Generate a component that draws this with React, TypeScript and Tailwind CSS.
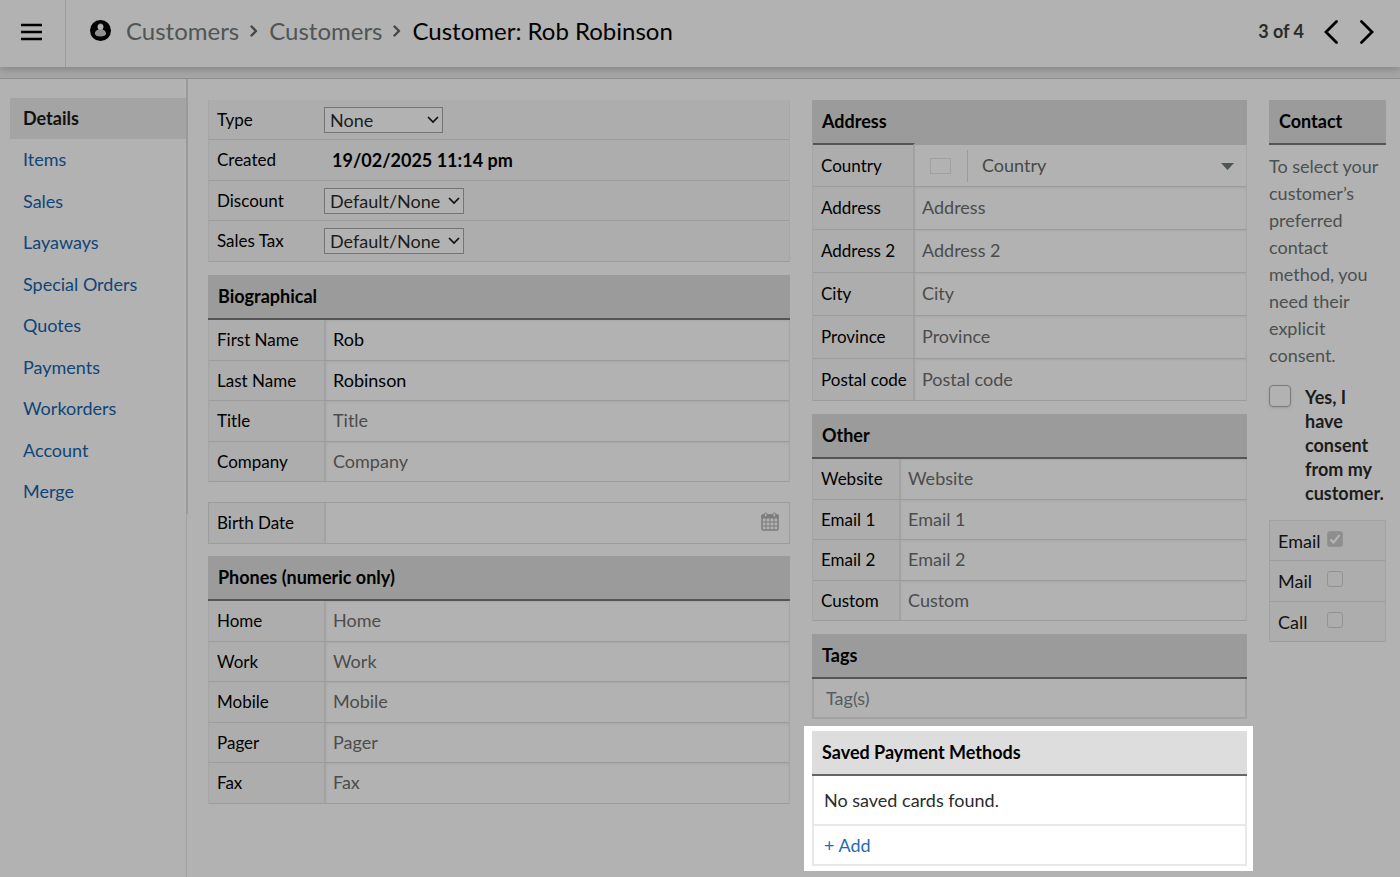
import { useState } from 'react';
import type { ReactNode } from 'react';
import clsx from 'clsx';

interface Field {
  label: string;
  value?: string;
}

const NAV_ITEMS = [
  'Details',
  'Items',
  'Sales',
  'Layaways',
  'Special Orders',
  'Quotes',
  'Payments',
  'Workorders',
  'Account',
  'Merge',
];

const BIO_FIELDS: Field[] = [
  { label: 'First Name', value: 'Rob' },
  { label: 'Last Name', value: 'Robinson' },
  { label: 'Title' },
  { label: 'Company' },
];

const PHONE_FIELDS: Field[] = [
  { label: 'Home' },
  { label: 'Work' },
  { label: 'Mobile' },
  { label: 'Pager' },
  { label: 'Fax' },
];

const ADDRESS_FIELDS: Field[] = [
  { label: 'Address' },
  { label: 'Address 2' },
  { label: 'City' },
  { label: 'Province' },
  { label: 'Postal code' },
];

const OTHER_FIELDS: Field[] = [
  { label: 'Website' },
  { label: 'Email 1' },
  { label: 'Email 2' },
  { label: 'Custom' },
];

const SUMMARY_ROW = 'odd:h-10 even:h-[41px]';

function SectionTitle({ children, className }: { children: ReactNode; className?: string }) {
  return (
    <h2
      className={clsx(
        'h-[45px] px-2.5 pb-px flex items-center border-b-2 text-lg font-bold text-black',
        className ?? 'bg-[#9b9b9b] border-[#555]'
      )}
    >
      {children}
    </h2>
  );
}

interface FieldRowProps {
  id: string;
  label: string;
  labelClass: string;
  className?: string;
  children: ReactNode;
}

function FieldRow({ id, label, labelClass, className, children }: FieldRowProps) {
  return (
    <div className={clsx('flex border-b border-[#9c9c9c]', className ?? 'odd:h-[41px] even:h-10')}>
      <label
        htmlFor={id}
        className={clsx('shrink-0 flex items-center pl-2 bg-[#adadad] text-[17px] text-black whitespace-nowrap', labelClass)}
      >
        {label}
      </label>
      {children}
    </div>
  );
}

interface TextFieldsProps {
  prefix: string;
  fields: Field[];
  labelClass: string;
  rowClass?: string;
}

function TextFields({ prefix, fields, labelClass, rowClass }: TextFieldsProps) {
  return (
    <>
      {fields.map(f => (
        <FieldRow
          key={f.label}
          id={`${prefix}-${f.label}`}
          label={f.label}
          className={rowClass}
          labelClass={clsx('border-r-2 border-[#a2a2a2]', labelClass)}
        >
          <input
            id={`${prefix}-${f.label}`}
            type="text"
            defaultValue={f.value}
            placeholder={f.label}
            className="flex-1 min-w-0 px-[7px] pb-0.5 text-lg text-black placeholder:text-[#4c4c4c] shadow-[inset_0_1px_2px_#a6a6a6] focus:outline-none"
          />
        </FieldRow>
      ))}
    </>
  );
}

function SelectRow({ id, label, option, width }: { id: string; label: string; option: string; width: string }) {
  return (
    <FieldRow id={id} label={label} className={SUMMARY_ROW} labelClass="w-[115px]">
      <div className="flex-1 flex items-center bg-[#adadad]">
        <div className={clsx('relative', width)}>
          <select
            id={id}
            className="appearance-none block w-full h-[26px] pl-[5px] pb-0.5 text-lg leading-6 text-[#1c1c1c] bg-[#b2b2b2] border border-[#757575]"
          >
            <option>{option}</option>
          </select>
          <svg className="absolute right-1 top-2 w-3 h-2.5 pointer-events-none" viewBox="0 0 12 10" fill="none" stroke="#111" strokeWidth="1.7">
            <path d="M1 2l5 5 5-5" />
          </svg>
        </div>
      </div>
    </FieldRow>
  );
}

function Header() {
  return (
    <header className="relative flex items-stretch h-[67px] bg-[#b2b2b2] shadow-[0_2px_8px_#808080]">
      <button aria-label="Menu" className="w-[66px] pl-[21px] pb-1 border-r border-[#9c9c9c]">
        <svg width="21" height="18" viewBox="0 0 21 18" stroke="#000" strokeWidth="2.300">
          <path d="M0 2h21M0 9h21M0 16h21" />
        </svg>
      </button>
      <nav className="flex flex-1 items-center pl-6 pb-1.5 text-2xl text-[#505555]">
        <svg width="21" height="21" viewBox="0 0 21 21" className="mr-[15px]">
          <circle cx="10.5" cy="10.5" r="10.5" fill="#000" />
          <path
            d="M10.5 3.6c1.8 0 3 1.4 3 3.2 0 1-.4 2-1 2.600 2 .5 3.600 2 3.600 4.200 0 1.900-2.200 3-5.600 3s-5.600-1.100-5.600-3c0-2.200 1.600-3.700 3.600-4.200-.6-.6-1-1.600-1-2.600 0-1.800 1.200-3.200 3-3.200z"
            fill="#909090"
          />
          <circle cx="10.5" cy="7" r="2.700" fill="#b2b2b2" />
        </svg>
        <a href="#customers">Customers</a>
        <Separator />
        <a href="#customers-list">Customers</a>
        <Separator />
        <h1 className="text-black">Customer: Rob Robinson</h1>
      </nav>
      <div className="flex items-center pr-[26px] pb-1">
        <span className="mr-5 pb-0.5 text-lg font-bold text-[#2b2b2b]">3 of 4</span>
        <button aria-label="Previous" className="mr-[22px]">
          <svg width="14" height="24" viewBox="0 0 14 24" fill="none" stroke="#000" strokeWidth="2.800" strokeLinecap="round">
            <path d="M12.500 1.500L2 12l10.500 10.500" />
          </svg>
        </button>
        <button aria-label="Next">
          <svg width="14" height="24" viewBox="0 0 14 24" fill="none" stroke="#000" strokeWidth="2.800" strokeLinecap="round">
            <path d="M1.500 1.500L12 12 1.500 22.500" />
          </svg>
        </button>
      </div>
    </header>
  );
}

function Separator() {
  return (
    <svg width="8" height="12" viewBox="0 0 8 12" fill="none" stroke="#41474a" strokeWidth="2.400" className="mx-[11px]" strokeLinecap="round" strokeLinejoin="round">
      <path d="M1.500 1.500L6 6l-4.500 4.500" />
    </svg>
  );
}

function Sidebar() {
  return (
    <aside className="shrink-0 w-[188px] flex flex-col">
      <nav className="pt-[19px] pb-px pl-2.5 border-r-2 border-[#9a9a9a]">
        {NAV_ITEMS.map((item, i) => (
          <a
            key={item}
            href={`#${item}`}
            className={clsx(
              'flex items-center pl-[13px] pb-0.5 text-lg odd:h-[41px] even:h-[42px]',
              i === 0 ? 'bg-[#a4a4a4] font-bold text-[#111]' : 'text-[#104577]'
            )}
          >
            {item}
          </a>
        ))}
      </nav>
      <div className="flex-1 mr-px border-r border-[#a0a0a0]" />
    </aside>
  );
}

function CalendarIcon() {
  return (
    <svg width="18" height="19" viewBox="0 0 18 19" fill="none" stroke="#7c7c7c">
      <rect x="1" y="3" width="16" height="15" rx="1" strokeWidth="1.500" />
      <path d="M1 3h16v3H1z" fill="#7c7c7c" />
      <path d="M5 6v12M9 6v12M13 6v12M1 10h16M1 14h16" />
      <rect x="3.500" y="1" width="2.500" height="4" rx="1.200" fill="#b2b2b2" />
      <rect x="12" y="1" width="2.500" height="4" rx="1.200" fill="#b2b2b2" />
    </svg>
  );
}

function ContactPanel() {
  const [consent, setConsent] = useState(false);

  return (
    <section className="min-w-0">
      <SectionTitle>Contact</SectionTitle>
      <p className="pt-2 text-lg leading-[27px] text-[#4b5050]">
        To select your customer’s preferred contact method, you need their explicit consent.
      </p>
      <label className="mt-4 flex items-start gap-3.5 text-lg leading-6 font-bold text-[#1c1c1c]">
        <input
          type="checkbox"
          checked={consent}
          onChange={e => setConsent(e.target.checked)}
          className="appearance-none shrink-0 w-[22px] h-[22px] rounded border border-[#7a7a7a] shadow-sm checked:bg-[#164b80]"
        />
        Yes, I have consent from my customer.
      </label>
      <div className="mt-[15px] border border-b-0 border-[#a2a2a2] bg-[#adadad]">
        {['Email', 'Mail', 'Call'].map(method => (
          <div key={method} className="flex items-center pl-2 border-b border-[#9c9c9c] odd:h-10 even:h-[41px]">
            <label htmlFor={method} className="w-[49px] text-lg text-[#111]">{method}</label>
            <div className="relative w-4 h-4 mb-1">
              <input
                id={method}
                type="checkbox"
                disabled
                defaultChecked={method === 'Email'}
                className="peer appearance-none block w-4 h-4 rounded-[3px] border border-[#929292] checked:bg-[#8e8e8e]"
              />
              <svg className="absolute inset-0 hidden peer-checked:block" viewBox="0 0 16 16" fill="none" stroke="#b8b8b8" strokeWidth="2">
                <path d="M3.500 8.500L6.500 11.500 12.500 4" />
              </svg>
            </div>
          </div>
        ))}
      </div>
    </section>
  );
}

function SavedPaymentMethods() {
  return (
    <section className="mt-[7px] -ml-2 -mr-1.5 pl-2 pr-1.5 py-[5px] bg-white">
      <SectionTitle className="bg-[#ddd] border-[#666]">Saved Payment Methods</SectionTitle>
      <div className="border-x-2 border-b-2 border-[#e8e8e8] text-lg">
        <p className="h-[50px] pl-2.5 flex items-center border-b-2 border-[#e8e8e8] text-[#2b2b2b]">No saved cards found.</p>
        <div className="h-[38px] pl-2.5 flex items-center">
          <button className="text-[#1f6cb5]">+ Add</button>
        </div>
      </div>
    </section>
  );
}

export default function App() {
  return (
    <div className="min-h-screen flex flex-col bg-[#b2b2b2] font-['Lato',sans-serif]">
      <Header />
      <div className="h-3 bg-[#a6a6a6] border-b border-[#8e8e8e]" />
      <div className="flex flex-1">
        <Sidebar />
        <main className="flex-1 min-w-0 grid grid-cols-[minmax(0,582fr)_minmax(0,435fr)_minmax(0,117fr)] gap-[22px] items-start pt-[21px] pl-5 pr-3.5">
          <div>
            <section className="border-x border-[#a6a6a6]">
              <SelectRow id="type" label="Type" option="None" width="w-[119px]" />
              <FieldRow id="created" label="Created" className={SUMMARY_ROW} labelClass="w-[115px]">
                <output id="created" className="flex-1 flex items-center pl-2 bg-[#adadad] text-lg font-bold text-black">
                  19/02/2025 11:14 pm
                </output>
              </FieldRow>
              <SelectRow id="discount" label="Discount" option="Default/None" width="w-[140px]" />
              <SelectRow id="tax" label="Sales Tax" option="Default/None" width="w-[140px]" />
            </section>

            <section className="mt-[13px]">
              <SectionTitle>Biographical</SectionTitle>
              <div className="border-x border-[#a6a6a6]">
                <TextFields prefix="bio" fields={BIO_FIELDS} labelClass="w-[117px]" />
              </div>
            </section>

            <div className="mt-5 border-x border-t border-[#9c9c9c]">
              <FieldRow id="birth-date" label="Birth Date" labelClass="w-[117px] border-r-2 border-[#a2a2a2]">
                <input id="birth-date" type="text" className="flex-1 min-w-0 px-[7px] text-lg focus:outline-none" />
                <button aria-label="Choose date" className="px-2.5 pb-1">
                  <CalendarIcon />
                </button>
              </FieldRow>
            </div>

            <section className="mt-3">
              <SectionTitle>Phones (numeric only)</SectionTitle>
              <div className="border-x border-[#a6a6a6]">
                <TextFields prefix="phone" fields={PHONE_FIELDS} labelClass="w-[117px]" />
              </div>
            </section>
          </div>

          <div>
            <section>
              <SectionTitle className="bg-[#9b9b9b] border-[#9b9b9b]">Address</SectionTitle>
              <div className="border-x border-[#a6a6a6]">
                <FieldRow
                  id="country"
                  label="Country"
                  className="h-[42px]"
                  labelClass="w-[102px] border-r-2 border-r-[#a2a2a2] -mt-0.5 border-t-2 border-t-[#555]"
                >
                  <div className="relative flex-1 flex items-center pl-[15px]">
                    <span className="w-[21px] h-4 border border-[#a0a0a0]" />
                    <span className="ml-4 h-8 border-l border-[#9a9a9a]" />
                    <select id="country" className="appearance-none flex-1 min-w-0 h-full pl-3.5 pb-0.5 text-lg text-[#484848]">
                      <option>Country</option>
                    </select>
                    <svg className="absolute right-3 top-[18px] w-[13px] h-[7px] pointer-events-none" viewBox="0 0 13 7" fill="#4e5555">
                      <path d="M0 0h13L6.500 7z" />
                    </svg>
                  </div>
                </FieldRow>
                <TextFields
                  prefix="address"
                  fields={ADDRESS_FIELDS}
                  labelClass="w-[102px]"
                  rowClass="h-[43px] last:h-[42px]"
                />
              </div>
            </section>

            <section className="mt-[13px]">
              <SectionTitle>Other</SectionTitle>
              <div className="border-x border-[#a6a6a6]">
                <TextFields prefix="other" fields={OTHER_FIELDS} labelClass="w-[88px]" />
              </div>
            </section>

            <section className="mt-[13px]">
              <SectionTitle>Tags</SectionTitle>
              <input
                type="text"
                aria-label="Tags"
                placeholder="Tag(s)"
                className="block w-full h-10 px-3 pb-px text-lg border-2 border-t-0 border-[#a2a2a2] placeholder:text-[#565c5f] focus:outline-none"
              />
            </section>

            <SavedPaymentMethods />
          </div>

          <ContactPanel />
        </main>
      </div>
    </div>
  );
}
